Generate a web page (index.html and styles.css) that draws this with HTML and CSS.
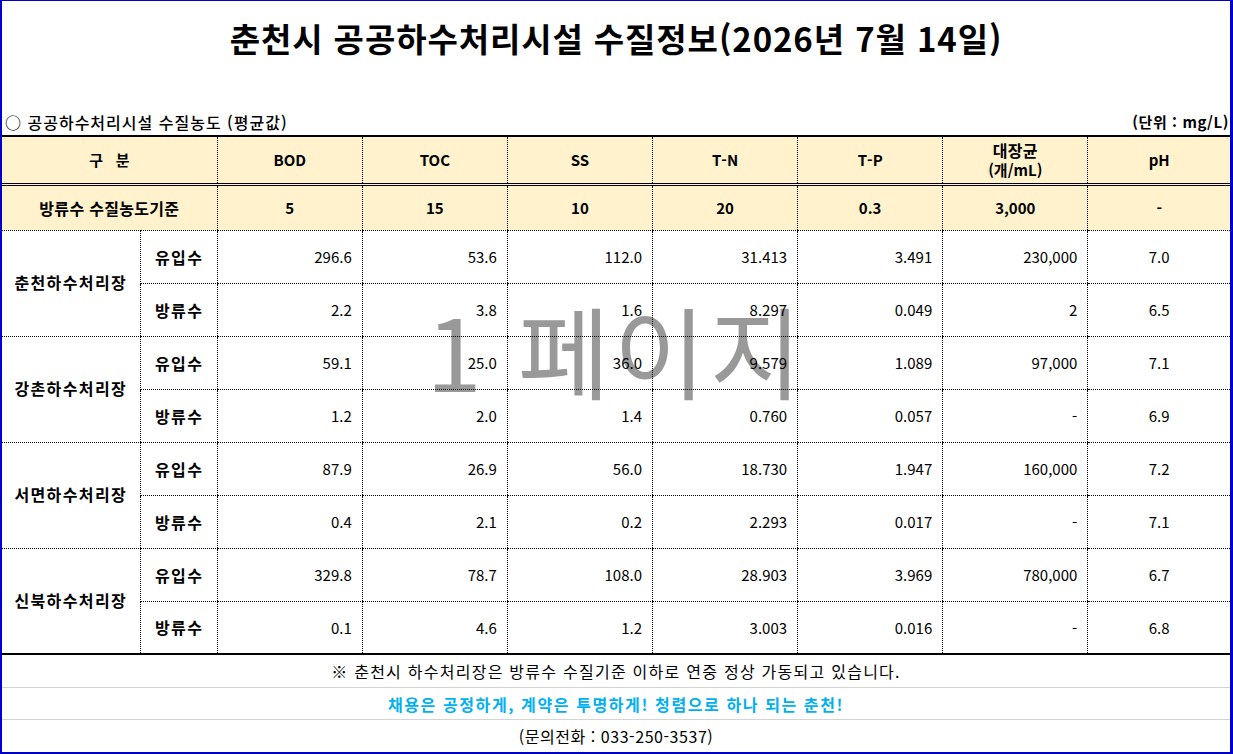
FILE: index.html
```html
<!DOCTYPE html>
<html lang="ko">
<head>
<meta charset="utf-8">
<title>춘천시 공공하수처리시설 수질정보</title>
<link rel="stylesheet" href="styles.css">
</head>
<body>
<div class="page">
  <div class="title">춘천시 공공하수처리시설 수질정보(2026년 7월 14일)</div>
  <div class="subbar">
    <span class="sub-left">○ 공공하수처리시설 수질농도 (평균값)</span>
    <span class="sub-right">(단위 : mg/L)</span>
  </div>
  <div class="table-wrap">
    <div class="watermark">1 페이지</div>
    <table class="wq">
      <colgroup>
        <col class="c-plant"><col class="c-type">
        <col class="c-val"><col class="c-val"><col class="c-val"><col class="c-val"><col class="c-val"><col class="c-val">
        <col class="c-ph">
      </colgroup>
      <thead>
        <tr class="head">
          <th colspan="2">구&nbsp;&nbsp;&nbsp;분</th>
          <th>BOD</th><th>TOC</th><th>SS</th><th>T-N</th><th>T-P</th>
          <th><span class="kr">대장균</span><br>(개/mL)</th>
          <th class="last">pH</th>
        </tr>
        <tr class="std">
          <th colspan="2"><span class="kr">방류수 수질농도기준</span></th>
          <th>5</th><th>15</th><th>10</th><th>20</th><th>0.3</th><th>3,000</th><th class="last">-</th>
        </tr>
      </thead>
      <tbody>
        <tr>
          <td class="plant" rowspan="2">춘천하수처리장</td>
          <td class="type">유입수</td>
          <td>296.6</td><td>53.6</td><td>112.0</td><td>31.413</td><td>3.491</td><td>230,000</td><td class="ph">7.0</td>
        </tr>
        <tr>
          <td class="type">방류수</td>
          <td>2.2</td><td>3.8</td><td>1.6</td><td>8.297</td><td>0.049</td><td>2</td><td class="ph">6.5</td>
        </tr>
        <tr>
          <td class="plant" rowspan="2">강촌하수처리장</td>
          <td class="type">유입수</td>
          <td>59.1</td><td>25.0</td><td>36.0</td><td>9.579</td><td>1.089</td><td>97,000</td><td class="ph">7.1</td>
        </tr>
        <tr>
          <td class="type">방류수</td>
          <td>1.2</td><td>2.0</td><td>1.4</td><td>0.760</td><td>0.057</td><td>-</td><td class="ph">6.9</td>
        </tr>
        <tr>
          <td class="plant" rowspan="2">서면하수처리장</td>
          <td class="type">유입수</td>
          <td>87.9</td><td>26.9</td><td>56.0</td><td>18.730</td><td>1.947</td><td>160,000</td><td class="ph">7.2</td>
        </tr>
        <tr>
          <td class="type">방류수</td>
          <td>0.4</td><td>2.1</td><td>0.2</td><td>2.293</td><td>0.017</td><td>-</td><td class="ph">7.1</td>
        </tr>
        <tr>
          <td class="plant last-plant" rowspan="2">신북하수처리장</td>
          <td class="type">유입수</td>
          <td>329.8</td><td>78.7</td><td>108.0</td><td>28.903</td><td>3.969</td><td>780,000</td><td class="ph">6.7</td>
        </tr>
        <tr class="lastrow">
          <td class="type">방류수</td>
          <td>0.1</td><td>4.6</td><td>1.2</td><td>3.003</td><td>0.016</td><td>-</td><td class="ph">6.8</td>
        </tr>
      </tbody>
    </table>
  </div>
  <div class="foot">
    <div class="foot-row note">※ 춘천시 하수처리장은 방류수 수질기준 이하로 연중 정상 가동되고 있습니다.</div>
    <div class="foot-row slogan">채용은 공정하게, 계약은 투명하게! 청렴으로 하나 되는 춘천!</div>
    <div class="foot-row contact">(문의전화 : 033-250-3537)</div>
  </div>
</div>
</body>
</html>
```
FILE: styles.css
```css
* { box-sizing: border-box; }
html, body { margin: 0; padding: 0; background: #fff; }
body {
  font-family: "Noto Sans CJK KR", "Noto Sans", sans-serif;
  color: #000;
}
.page {
  width: 1233px;
  height: 754px;
  border-style: solid;
  border-color: #0000cc;
  border-width: 1px 3px 2px 2px;
  display: flex;
  flex-direction: column;
}
.title {
  height: 74px;
  line-height: 74px;
  text-align: center;
  font-size: 33px;
  font-weight: 700;
  letter-spacing: 0.9px;
}
.subbar {
  height: 60px;
  display: flex;
  justify-content: space-between;
  align-items: flex-end;
  padding: 0 1px 3px 3px;
  font-size: 16px;
  line-height: 20px;
}
.sub-left { font-weight: 500; letter-spacing: 1px; }
.sub-right { font-weight: 700; font-size: 15px; letter-spacing: 0.6px; }
.table-wrap {
  position: relative;
}
.watermark {
  position: absolute;
  left: 0;
  right: 0;
  top: 164px;
  text-align: center;
  font-size: 100px;
  line-height: 100px;
  letter-spacing: 4px;
  color: #999;
  font-weight: 400;
  z-index: 0;
  pointer-events: none;
}
.wq {
  position: relative;
  z-index: 1;
  width: 1228px;
  border-collapse: collapse;
  table-layout: fixed;
  font-size: 15px;
}
.c-plant { width: 138px; }
.c-type { width: 77px; }
.c-val { width: 145px; }
.c-ph { width: 142px; }
.wq th, .wq td {
  padding: 0;
  border-left: 1px dotted #000;
  border-bottom: 1px dotted #000;
}
.wq th:first-child, .wq td.plant { border-left: none; }
.wq th.last, .wq td.ph { border-right: none; }
.head th {
  background: #fff2cc;
  border-top: 2px solid #000;
  border-bottom: 3px double #000;
  height: 48px;
  font-weight: 700;
  line-height: 19px;
  text-align: center;
}
.std th {
  background: #fff2cc;
  height: 46px;
  font-weight: 700;
  text-align: center;
}
.kr { font-size: 16px; letter-spacing: 0.3px; }
.wq td {
  height: 53px;
  text-align: right;
  padding-right: 10px;
  font-weight: 400;
}
.wq td.plant, .wq td.type {
  text-align: center;
  padding-right: 0;
  font-weight: 700;
  font-size: 16px;
  letter-spacing: 1.4px;
}
.wq td.type { padding-left: 1px; }
.wq td.plant { padding-bottom: 2px; }
.wq td.ph { text-align: center; padding-right: 0; }
.lastrow td, .wq td.last-plant { border-bottom: 2px solid #000; }
.foot {
  flex: 1;
  display: flex;
  flex-direction: column;
}
.foot-row {
  flex: 1;
  display: flex;
  align-items: center;
  justify-content: center;
  font-size: 16px;
  border-bottom: 1px solid #d4d4d4;
}
.foot-row:last-child { border-bottom: none; }
.note { letter-spacing: 1.25px; }
.slogan {
  color: #00b0f0;
  font-weight: 700;
  letter-spacing: 1.6px;
}
.contact { letter-spacing: 0.55px; }
```
